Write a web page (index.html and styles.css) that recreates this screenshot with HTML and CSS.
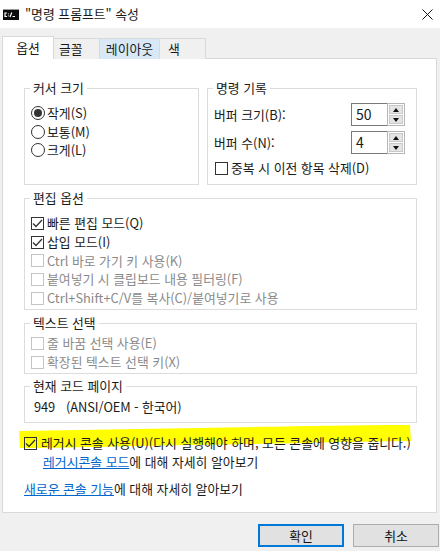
FILE: index.html
```html
<!DOCTYPE html>
<html lang="ko">
<head>
<meta charset="utf-8">
<title>"명령 프롬프트" 속성</title>
<link rel="stylesheet" href="styles.css">
</head>
<body>
<div class="dialog">
  <header class="titlebar">
    <svg class="appicon" width="16" height="11" viewBox="0 0 16 11"><rect width="16" height="11" fill="#0c0c0c"/><rect width="16" height="1" fill="#9a9a9a"/><path d="M4 4H2v3.5h2M5.5 4.5v.8M5.5 6.5v.8M7 8l1.8-4.5M9.5 7.5H12" stroke="#fff" stroke-width="1.2" fill="none"/></svg>
    <span class="title">"명령 프롬프트" 속성</span>
    <svg class="close" width="11" height="11" viewBox="0 0 11 11"><path d="M.5.5l10 10M10.5.5l-10 10" stroke="#111" fill="none"/></svg>
  </header>
  <div class="body">
    <nav class="tabs">
      <div class="tab active">옵션</div>
      <div class="tab t2">글꼴</div>
      <div class="tab t3">레이아웃</div>
      <div class="tab t4">색</div>
    </nav>
    <main class="panel">
      <div class="toprow">
        <fieldset class="group cursor">
          <legend>커서 크기</legend>
          <label class="line"><span class="radio on"></span>작게(S)</label>
          <label class="line"><span class="radio"></span>보통(M)</label>
          <label class="line"><span class="radio"></span>크게(L)</label>
        </fieldset>
        <fieldset class="group history">
          <legend>명령 기록</legend>
          <div class="spinrow">
            <span>버퍼 크기(B):</span>
            <div class="spin"><span class="spinval">50</span><span class="arrows"><i class="up"></i><i class="down"></i></span></div>
          </div>
          <div class="spinrow">
            <span>버퍼 수(N):</span>
            <div class="spin"><span class="spinval">4</span><span class="arrows"><i class="up"></i><i class="down"></i></span></div>
          </div>
          <label class="line dedupe"><span class="check"></span>중복 시 이전 항목 삭제(D)</label>
        </fieldset>
      </div>
      <fieldset class="group edit">
        <legend>편집 옵션</legend>
        <label class="row"><span class="check"><svg width="11" height="9" viewBox="0 0 11 9"><path d="M1 4.5l3 3 6-6.5" stroke="#333" stroke-width="1.3" fill="none"/></svg></span>빠른 편집 모드(Q)</label>
        <label class="row"><span class="check"><svg width="11" height="9" viewBox="0 0 11 9"><path d="M1 4.5l3 3 6-6.5" stroke="#333" stroke-width="1.3" fill="none"/></svg></span>삽입 모드(I)</label>
        <label class="row off"><span class="check"></span>Ctrl 바로 가기 키 사용(K)</label>
        <label class="row off"><span class="check"></span>붙여넣기 시 클립보드 내용 필터링(F)</label>
        <label class="row off"><span class="check"></span>Ctrl+Shift+C/V를 복사(C)/붙여넣기로 사용</label>
      </fieldset>
      <fieldset class="group select">
        <legend>텍스트 선택</legend>
        <label class="row off"><span class="check"></span>줄 바꿈 선택 사용(E)</label>
        <label class="row off"><span class="check"></span>확장된 텍스트 선택 키(X)</label>
      </fieldset>
      <fieldset class="group code">
        <legend>현재 코드 페이지</legend>
        <div class="codeline"><span class="cp">949</span><span>(ANSI/OEM - 한국어)</span></div>
      </fieldset>
      <div class="legacy">
        <svg class="marker" width="392" height="24" viewBox="0 0 392 24"><path d="M0 6C60 5 120 4 180 3S330 0 391 0L392 16C320 17 250 19 170 20S60 23 1 23Z" fill="#ffff00"/></svg>
        <label class="line legacyline"><span class="check dark"><svg width="11" height="9" viewBox="0 0 11 9"><path d="M1 4.5l3 3 6-6.5" stroke="#333" stroke-width="1.3" fill="none"/></svg></span>레거시 콘솔 사용(U)(다시 실행해야 하며, 모든 콘솔에 영향을 줍니다.)</label>
      </div>
      <p class="learn sub"><a href="#">레거시콘솔 모드</a>에 대해 자세히 알아보기</p>
      <p class="learn"><a href="#">새로운 콘솔 기능</a>에 대해 자세히 알아보기</p>
    </main>
    <footer class="buttons">
      <button class="btn primary">확인</button>
      <button class="btn">취소</button>
    </footer>
  </div>
</div>
</body>
</html>
```

FILE: styles.css
```css
* { box-sizing: border-box; }
html, body { margin: 0; padding: 0; }
body {
  width: 440px; height: 551px; overflow: hidden; background: #f0f0f0;
  font: 12.85px/16px "Noto Sans CJK KR", "Open Sans", sans-serif; color: #1a1a1a;
}
.dialog { display: flex; flex-direction: column; height: 551px; }
.titlebar { height: 28px; background: #fff; display: flex; align-items: center; padding: 0 5px 0 3px; }
.appicon { margin-right: 6px; }
.title { flex: 1; }
.close { margin-right: 2px; }
.body { flex: 1; padding: 8px 0 0 2px; display: flex; flex-direction: column; }
.tabs { display: flex; height: 22px; position: relative; z-index: 1; }
.tab { height: 21px; margin-top: 2px; border: 1px solid #d9d9d9; border-left: 0; border-bottom: 0; background: #f0f0f0; text-align: center; line-height: 19px; }
.tab.active { width: 52px; height: 23px; margin-top: 0; background: #fff; border-left: 1px solid #d9d9d9; line-height: 21px; }
.t2 { width: 46px; text-align: left; padding-left: 5px; }
.t3 { width: 60px; background: #d8e8f7; }
.t4 { width: 46px; text-align: left; padding-left: 8px; }
.panel { width: 435px; height: 455px; background: #fff; border: 1px solid #d9d9d9; padding: 21px 19px 0 21px; position: relative; }
.group { border: 1px solid #dcdcdc; margin: 0; padding: 0 0 0 6px; min-width: 0; }
.group legend { padding: 0 3px; margin-left: -1px; line-height: 16px; }
.toprow { display: grid; grid-template-columns: 175px 210px; gap: 8px; }
.cursor, .history { height: 105px; }
.cursor { padding-top: 8px; }
.line { display: flex; align-items: center; height: 18.5px; }
.radio { width: 14px; height: 14px; border: 1px solid #333; border-radius: 50%; margin-right: 2px; flex: none; display: flex; align-items: center; justify-content: center; }
.radio.on::after { content: ""; width: 8px; height: 8px; border-radius: 50%; background: #333; }
.check { width: 13px; height: 13px; border: 1px solid #333; margin-right: 3px; flex: none; background: #fff; display: flex; align-items: center; justify-content: center; }
.off { color: #8a8a8a; }
.off .check { border-color: #c4c4c4; }
.history { padding: 7px 0 0 6px; }
.spinrow { display: flex; justify-content: space-between; align-items: center; height: 23px; margin-bottom: 5px; padding-right: 11px; }
.spin { display: flex; width: 54px; height: 23px; border: 1px solid #7a7a7a; border-right: 0; }
.spinval { flex: 1; padding-left: 4px; line-height: 21px; font-size: 14px; }
.arrows { width: 18px; margin: -1px 0; display: flex; flex-direction: column; gap: 1px; border: 1px solid #b4b4b4; padding: 1px; background: #fff; }
.arrows i { flex: 1; background: #e4e4e4; border: 1px solid #c8c8c8; position: relative; }
.arrows i::after { content: ""; position: absolute; left: 3px; width: 0; height: 0; border-left: 3.5px solid transparent; border-right: 3.5px solid transparent; }
.arrows .up::after { top: 2px; border-bottom: 4px solid #111; }
.arrows .down::after { top: 2px; border-top: 4px solid #111; }
.dedupe { margin: 4px 0 0 1px; }
.edit { margin-top: 5px; height: 120px; padding-top: 8px; }
.select { margin-top: 5px; height: 59px; padding-top: 3px; }
.row { display: flex; align-items: center; height: 18.7px; }
.code { margin-top: 4px; height: 45px; padding: 5px 0 0 9px; }
.code legend { margin-left: -4px; }
.codeline { display: flex; gap: 11px; letter-spacing: -.1px; }
.legacy { position: relative; margin-top: 11px; height: 18px; }
.marker { position: absolute; left: -5px; top: -9px; }
.legacyline { position: relative; }
.check.dark { background: transparent; margin-right: 4px; }
.learn { margin: 0; height: 16px; }
.learn.sub { margin: 2px 0 11px 19px; }
.learn a { color: #0066cc; text-decoration: underline; }
.buttons { display: flex; justify-content: flex-end; gap: 9px; padding: 11px 1px 0 0; }
.btn { width: 86px; height: 23px; border: 1px solid #adadad; background: #e1e1e1; font: inherit; color: #111; padding: 0; }
.btn.primary { border: 2px solid #0078d7; }
```
